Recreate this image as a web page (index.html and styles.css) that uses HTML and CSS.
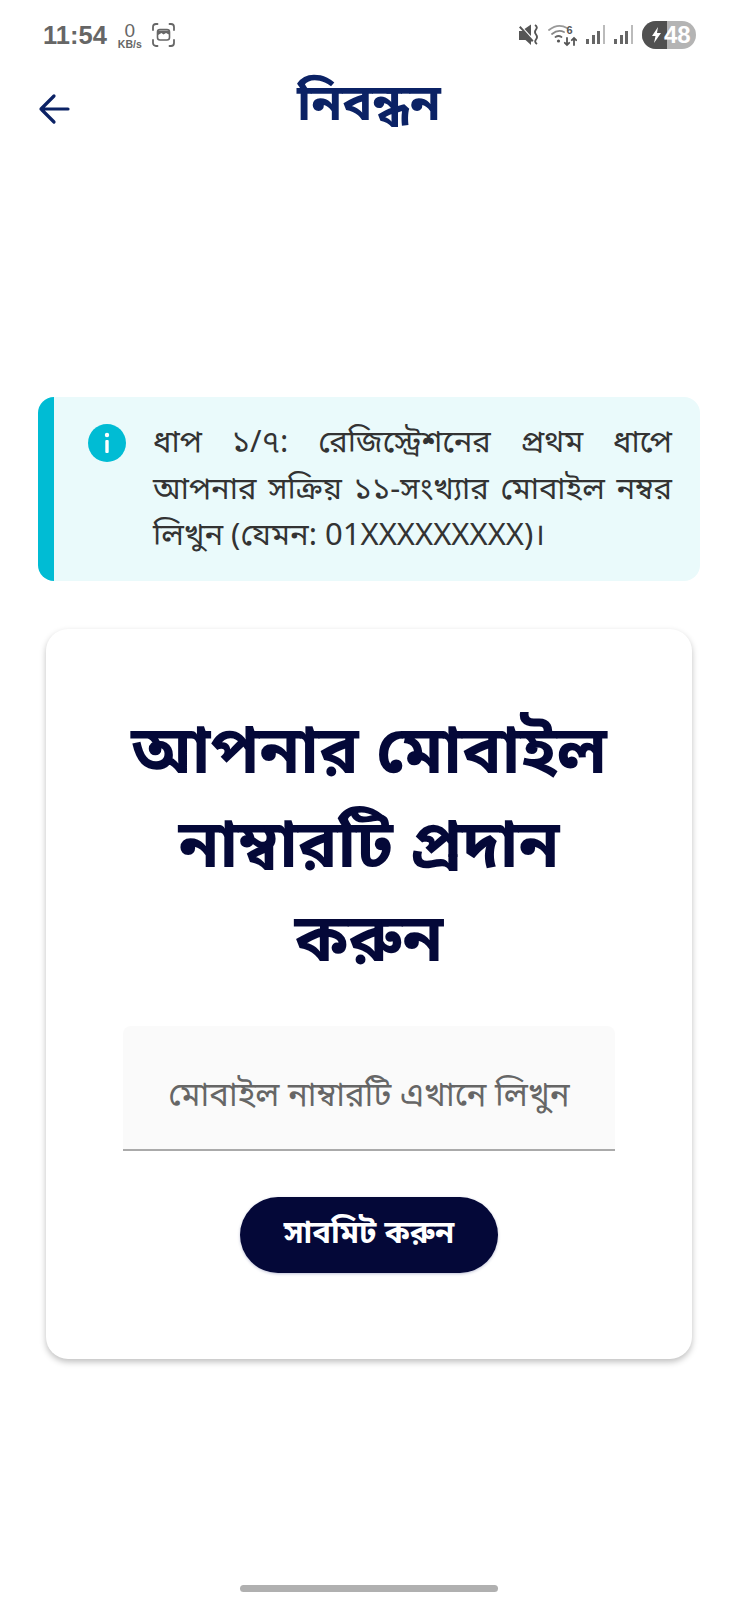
FILE: index.html
```html
<!DOCTYPE html>
<html lang="bn">
<head>
<meta charset="utf-8">
<title>নিবন্ধন</title>
<link rel="stylesheet" href="styles.css">
</head>
<body>
<div class="screen">
  <div class="status">
    <div class="status-left">
      <span class="time">11:54</span>
      <span class="speed"><span class="speed-num">0</span><span class="speed-unit">KB/s</span></span>
      <svg class="shot" viewBox="0 0 23 24" width="23" height="24" fill="none" stroke="#666" stroke-width="1.8" stroke-linecap="round">
        <path d="M1 7V4a3 3 0 0 1 3-3h1.500M17.500 1H19a3 3 0 0 1 3 3v3M22 17v3a3 3 0 0 1-3 3h-1.500M5.500 23H4a3 3 0 0 1-3-3v-3"/>
        <rect x="5.500" y="6.500" width="12" height="10.500" rx="2.500" stroke-width="1.600"/>
        <path d="M6 7.500h11v4l-3-1.500-2.500 1.500-2-1.500L6 12z" fill="#666" stroke="none"/>
      </svg>
    </div>
    <div class="status-right">
      <svg width="20" height="22" viewBox="0 0 20 22" fill="#555">
        <path d="M0 7h3.500L0 3.500 1.500 2l13 14.500-1.500 1.500-1-1V21l-5.500-5H0z"/>
        <path d="M5.500 5 12 0.500V12z"/>
        <path d="M16 1q3 2 1 4.500t0 5-0 5 1 4.500" fill="none" stroke="#555" stroke-width="1.900"/>
      </svg>
      <svg width="29" height="24" viewBox="0 0 29 24" fill="none" stroke="#999" stroke-width="1.800" stroke-linecap="round">
        <path d="M1 7q9-7 18-2"/>
        <path d="M4 11q6-5 12-2" stroke="#888"/>
        <path d="M7.500 14q3-2 6 0" stroke="#666"/>
        <circle cx="10.500" cy="18" r="1.600" fill="#555" stroke="none"/>
        <path d="M19 15v7M16.800 19.800 19 22l2.200-2.200M26 22v-7M23.800 17.200 26 15l2.200 2.200" stroke="#555"/>
        <text x="18.500" y="11" class="wifi-six">6</text>
      </svg>
      <svg width="19" height="22" viewBox="0 0 19 22">
        <rect x="0" y="15" width="3" height="5" fill="#666"/><rect x="6" y="11" width="3" height="9" fill="#666"/><rect x="11" y="7" width="3" height="13" fill="#666"/><rect x="17" y="1" width="2" height="19" fill="#bbb"/>
      </svg>
      <svg width="19" height="22" viewBox="0 0 19 22">
        <rect x="0" y="15" width="3" height="5" fill="#666"/><rect x="6" y="11" width="3" height="9" fill="#666"/><rect x="11" y="7" width="3" height="13" fill="#666"/><rect x="17" y="1" width="2" height="19" fill="#bbb"/>
      </svg>
      <div class="battery">
        <span class="battery-fill"><svg width="11" height="16" viewBox="0 0 11 16" fill="#fff"><path d="M7 0 1 9h3.500L3 16l7-10H6z"/></svg></span>
        <span class="battery-num">48</span>
      </div>
    </div>
  </div>

  <header class="appbar">
    <svg class="back" viewBox="0 0 32 32" width="32" height="32" fill="none" stroke="#0b2265" stroke-width="3.200" stroke-linecap="round" stroke-linejoin="round">
      <path d="M30 16H3M16 3 3 16l13 13"/>
    </svg>
    <h1 class="title">নিবন্ধন</h1>
  </header>

  <section class="notice">
    <svg class="info" viewBox="0 0 38 38" width="38" height="38">
      <circle cx="19" cy="19" r="19" fill="#00bcd4"/>
      <rect x="17.300" y="16" width="3.400" height="13" rx="1" fill="#fff"/>
      <circle cx="19" cy="11" r="2.200" fill="#fff"/>
    </svg>
    <p class="notice-text">ধাপ ১/৭: রেজিস্ট্রেশনের প্রথম ধাপে আপনার সক্রিয় ১১-সংখ্যার মোবাইল নম্বর লিখুন (যেমন: 01XXXXXXXXX)।</p>
  </section>

  <section class="card">
    <h2 class="card-title">আপনার মোবাইল নাম্বারটি প্রদান করুন</h2>
    <div class="field">মোবাইল নাম্বারটি এখানে লিখুন</div>
    <button class="submit">সাবমিট করুন</button>
  </section>

  <div class="home-bar"></div>
</div>
</body>
</html>
```
FILE: styles.css
```css
* { box-sizing: border-box; }
html, body { margin: 0; padding: 0; background: #fff; }
body { font-family: "Noto Sans Bengali", "Noto Sans", Roboto, sans-serif; }
.screen { width: 738px; height: 1600px; overflow: hidden; display: flex; flex-direction: column; align-items: center; position: relative; }

.status { width: 100%; height: 70px; padding: 21px 42px 0 43px; display: flex; justify-content: space-between; align-items: flex-start; flex-shrink: 0; }
.status-left, .status-right { display: flex; align-items: center; height: 28px; }
.status-left { gap: 10px; }
.status-right { gap: 9px; }
.time { font-family: "Liberation Sans", sans-serif; font-weight: 700; font-size: 25.500px; color: #666; margin-right: 1px; }
.speed { display: flex; flex-direction: column; align-items: center; font-family: "Liberation Sans", sans-serif; font-weight: 700; color: #666; line-height: 1; margin-top: 3px; }
.speed-num { font-size: 19px; line-height: 16px; font-weight: 400; }
.speed-unit { font-size: 10.500px; line-height: 11px; }
.wifi-six { font-family: "Liberation Sans", sans-serif; font-size: 11px; font-weight: 700; fill: #555; stroke: none; }
.battery { width: 54px; height: 28px; border-radius: 14px; overflow: hidden; background: #b4b4b4; display: flex; align-items: center; }
.battery-fill { width: 25px; height: 100%; background: #505050; display: flex; align-items: center; justify-content: center; padding-left: 3px; flex-shrink: 0; }
.battery-num { font-family: "Liberation Sans", sans-serif; font-weight: 700; font-size: 24px; color: #fff; margin-left: -3px; }

.appbar { width: 100%; height: 70px; position: relative; display: flex; justify-content: center; align-items: center; flex-shrink: 0; }
.back { position: absolute; left: 38px; top: 23px; }
.title { margin: 4px 0 0; font-size: 50px; font-weight: 700; color: #0b2265; line-height: 70px; }

.notice { width: 662px; height: 184px; margin-top: 257px; background: #eafafb; border-left: 16px solid #00bcd4; border-radius: 16px; display: flex; padding: 25px 28px 0 34px; gap: 27px; flex-shrink: 0; }
.info { flex-shrink: 0; margin-top: 2px; }
.notice-text { margin: 0; font-size: 31px; line-height: 46.500px; color: #333; text-align: justify; }

.card { width: 646px; height: 730px; margin-top: 48px; background: #fff; border-radius: 22px; box-shadow: 0 3px 6px rgba(0,0,0,.25); display: flex; flex-direction: column; align-items: center; padding-top: 80px; flex-shrink: 0; }
.card-title { margin: 0; width: 500px; font-size: 66px; line-height: 94px; font-weight: 700; color: #040838; text-align: center; }
.field { width: 492px; height: 125px; margin-top: 35px; padding-top: 20px; background: #fafafa; border-bottom: 2px solid #aaa; border-radius: 8px 8px 0 0; display: flex; justify-content: center; align-items: center; font-size: 33px; color: #666; white-space: nowrap; }
.submit { width: 258px; height: 76px; margin-top: 46px; border: 0; border-radius: 38px; background: #040838; color: #fff; font-family: inherit; font-size: 31px; font-weight: 700; box-shadow: 0 1px 3px rgba(40,50,120,.3); }

.home-bar { position: absolute; left: 240px; top: 1585px; width: 258px; height: 7px; border-radius: 4px; background: #b0b0b0; }
```
